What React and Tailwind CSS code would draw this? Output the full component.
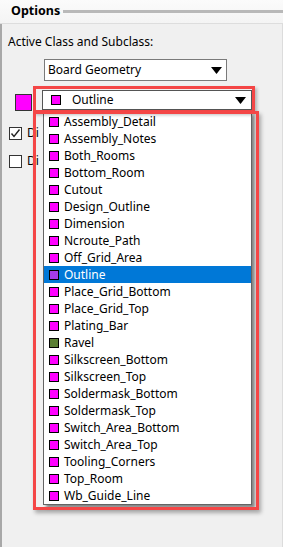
import React from "react";

const items = [
  ["Assembly_Detail", "#ff00ff"],
  ["Assembly_Notes", "#ff00ff"],
  ["Both_Rooms", "#ff00ff"],
  ["Bottom_Room", "#ff00ff"],
  ["Cutout", "#ff00ff"],
  ["Design_Outline", "#ff00ff"],
  ["Dimension", "#ff00ff"],
  ["Ncroute_Path", "#ff00ff"],
  ["Off_Grid_Area", "#ff00ff"],
  ["Outline", "#ff00ff"],
  ["Place_Grid_Bottom", "#ff00ff"],
  ["Place_Grid_Top", "#ff00ff"],
  ["Plating_Bar", "#ff00ff"],
  ["Ravel", "#5b7f34"],
  ["Silkscreen_Bottom", "#ff00ff"],
  ["Silkscreen_Top", "#ff00ff"],
  ["Soldermask_Bottom", "#ff00ff"],
  ["Soldermask_Top", "#ff00ff"],
  ["Switch_Area_Bottom", "#ff00ff"],
  ["Switch_Area_Top", "#ff00ff"],
  ["Tooling_Corners", "#ff00ff"],
  ["Top_Room", "#ff00ff"],
  ["Wb_Guide_Line", "#ff00ff"],
];

function Arrow() {
  return (
    <svg width="11" height="7" viewBox="0 0 11 7">
      <polygon points="0,0 11,0 5.5,7" fill="#000" />
    </svg>
  );
}

function Check({ checked }) {
  return (
    <div className="w-[13px] h-[13px] shrink-0 border border-[#333333] bg-white flex items-center justify-center">
      {checked && (
        <svg width="11" height="11" viewBox="0 0 11 11">
          <polyline points="1.5,5.5 4,8.5 9.5,1.5" fill="none" stroke="#222" strokeWidth="1.4" />
        </svg>
      )}
    </div>
  );
}

export default function App() {
  return (
    <div className="relative w-[283px] h-[547px] bg-[#f0f0f0] overflow-hidden text-[12px] text-black font-['Noto_Sans',sans-serif] flex flex-col">
      {/* header */}
      <div className="h-[24px] shrink-0 bg-gradient-to-b from-[#fbfbfb] to-[#f4f4f4] border-b border-[#dddddd] flex items-center pl-[11px]">
        <span className="font-bold text-[12.5px] leading-none">Options</span>
        <div className="flex-1 h-[3px] bg-[#b9b9b9] ml-[3px]" />
      </div>
      {/* body */}
      <div className="flex-1 border-l-2 border-l-[#a8a8a8] border-r border-r-[#dcdcdc] flex flex-col">
        <div className="pl-[6px] mt-[10px] leading-[16px]">Active Class and Subclass:</div>
        <div className="ml-[42px] mt-[9px] w-[183px] h-[22px] bg-white border border-[#7a7a7a] flex items-center pl-[3px] pr-[4px]">
          <span className="flex-1 leading-none">Board Geometry</span>
          <Arrow />
        </div>
        <div className="flex items-start mt-[9px]">
          <div className="ml-[13px] mt-[4px] w-[17px] h-[17px] bg-[#ff00ff] border border-[#333333]" />
          <div className="ml-[10px] w-[210px] h-[20px] bg-white border border-[#555555] flex items-center pl-[8px] pr-[5px]">
            <div className="w-[10px] h-[10px] bg-[#ff00ff] border border-black" />
            <span className="flex-1 ml-[11px] leading-none">Outline</span>
            <Arrow />
          </div>
        </div>
        <div className="flex items-center mt-[13px] pl-[7px]">
          <Check checked />
          <span className="ml-[5px] whitespace-nowrap">Di</span>
        </div>
        <div className="flex items-center mt-[10px] pl-[7px]">
          <Check />
          <span className="ml-[5px] whitespace-nowrap">Di</span>
        </div>
      </div>

      {/* dropdown list popup */}
      <div className="absolute left-[43px] top-[112px] w-[209px] bg-white border border-[#646464] shadow-[3px_3px_3px_rgba(0,0,0,0.45)] flex flex-col">
        {items.map(([name, color]) => {
          const sel = name === "Outline";
          return (
            <div
              key={name}
              className={
                sel
                  ? "h-[17px] flex items-center pl-[5px] bg-[#0078d7] text-white"
                  : "h-[17px] flex items-center pl-[5px]"
              }
            >
              <div
                className="w-[10px] h-[10px] border border-black"
                style={{ backgroundColor: sel ? "#a53ce8" : color }}
              />
              <span className="ml-[5px] leading-none">{name}</span>
            </div>
          );
        })}
      </div>

      {/* red annotations */}
      <div className="absolute left-[33px] top-[86px] w-[222px] h-[27px] border-[3px] border-[#f44646] shadow-[2px_2px_3px_rgba(0,0,0,0.25)]" />
      <div className="absolute left-[33px] top-[111px] w-[226px] h-[399px] border-[3px] border-[#f44646] shadow-[2px_3px_4px_rgba(0,0,0,0.3)]" />
    </div>
  );
}
